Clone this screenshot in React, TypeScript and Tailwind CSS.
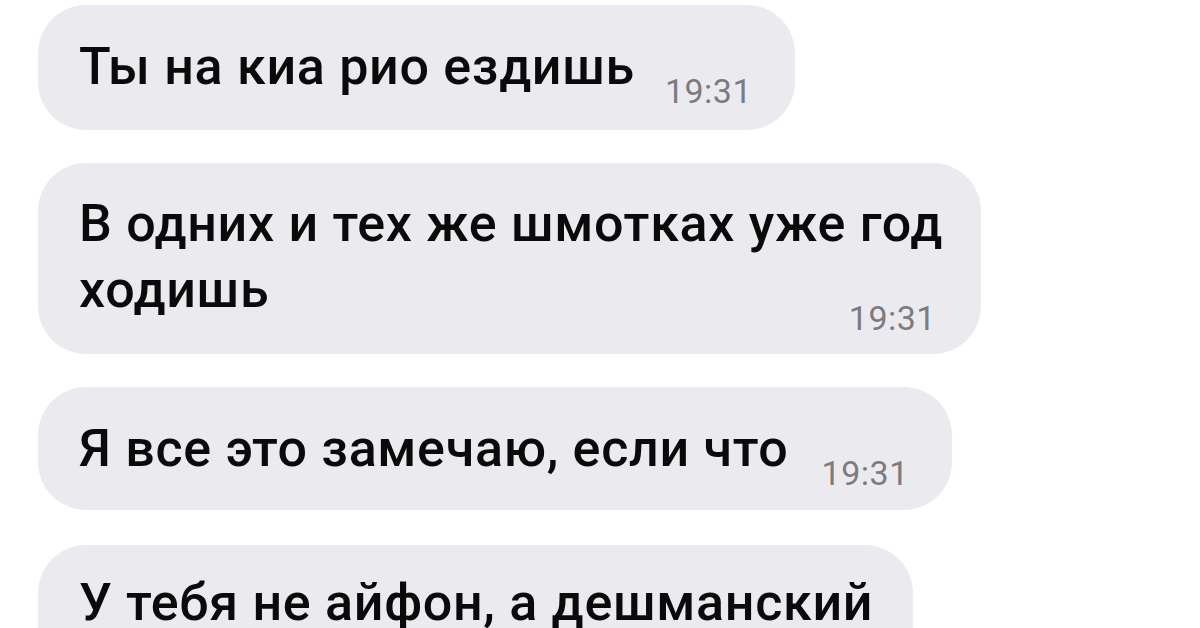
import React from "react";

const font = { fontFamily: "Roboto, 'Noto Sans', sans-serif" };

function Time() {
  return (
    <span className="text-[34px] leading-[40px] text-[#7c7c80] tracking-[0.5px]">19:31</span>
  );
}

const txt = "text-[52px] tracking-[0.7px] font-medium text-[#0a0a0a]";

export default function App() {
  return (
    <div
      className="w-[1200px] h-[628px] overflow-hidden bg-white pl-[38px] pt-[5px] flex flex-col items-start"
      style={font}
    >
      {/* Bubble 1 */}
      <div className="flex items-end bg-[#ebebef] rounded-[48px] pl-[41px] pr-[43px] pt-[33px] pb-[19px]">
        <span className={`${txt} leading-[58px] mb-[15px]`}>Ты на киа рио ездишь</span>
        <span className="ml-[30px]"><Time /></span>
      </div>

      {/* Bubble 2 */}
      <div className="mt-[33px] flex flex-col bg-[#ebebef] rounded-[48px] pl-[41px] pr-[38px] pt-[28px] pb-[16px]">
        <span className={`${txt} leading-[66px]`}>В одних и тех же шмотках уже год</span>
        <div className="flex items-end justify-between">
          <span className={`${txt} leading-[66px] mb-[15px]`}>ходишь</span>
          <span className="mr-[7px]"><Time /></span>
        </div>
      </div>

      {/* Bubble 3 */}
      <div className="mt-[33px] flex items-end bg-[#ebebef] rounded-[48px] pl-[41px] pr-[43px] pt-[33px] pb-[17px]">
        <span className={`${txt} leading-[58px] mb-[15px]`}>Я все это замечаю, если что</span>
        <span className="ml-[33px]"><Time /></span>
      </div>

      {/* Bubble 4 */}
      <div className="mt-[35px] flex flex-col bg-[#ebebef] rounded-[48px] pl-[41px] pr-[40px] pt-[25px] pb-[16px]">
        <span className={`${txt} leading-[66px]`}>У тебя не айфон, а дешманский</span>
        <div className="flex items-end justify-between">
          <span className={`${txt} leading-[66px] mb-[15px]`}>самсунг</span>
          <span className="mr-[7px]"><Time /></span>
        </div>
      </div>
    </div>
  );
}
